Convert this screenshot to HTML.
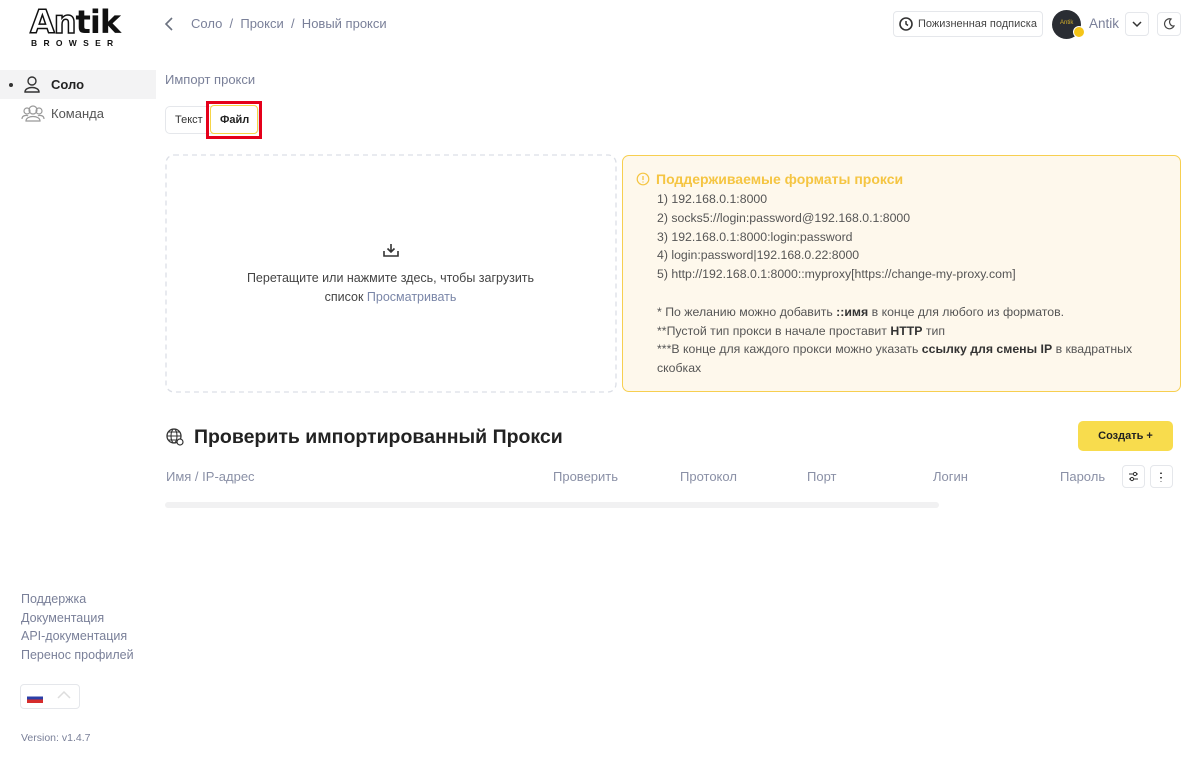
<!DOCTYPE html>
<html><head><meta charset="utf-8"><style>
*{box-sizing:border-box;margin:0;padding:0}
body{width:1197px;height:768px;background:#fff;font-family:"Liberation Sans","Noto Sans CJK SC",sans-serif;color:#444;position:relative;overflow:hidden;font-size:13px}
.a{position:absolute}
.grey{color:#7a8099}
.sb a{display:block;color:#7a8099;font-size:12.5px;line-height:18.5px;text-decoration:none}
.box{border:1px solid #e5e7eb;border-radius:4px;background:#fff}
.th{position:absolute;top:469px;font-size:13px;color:#8a90a6}
</style></head><body>
<div class="a" style="left:30px;top:6px;font-weight:900;font-size:32px;letter-spacing:-1px;color:#111;font-family:'DejaVu Sans',sans-serif;line-height:32px"><span style="color:#fff;-webkit-text-stroke:1.5px #111">An</span>tik</div>
<div class="a" style="left:31px;top:38px;font-size:8.5px;letter-spacing:6.3px;font-weight:bold;color:#111">BROWSER</div>
<svg class="a" style="left:163px;top:16px" width="12" height="16"><path d="M9 2 L3 8 L9 14" stroke="#6b7280" stroke-width="1.6" fill="none"/></svg>
<div class="a grey" style="left:191px;top:16px;font-size:13px">Соло &nbsp;/ &nbsp;Прокси &nbsp;/ &nbsp;Новый прокси</div>
<div class="a box" style="left:893px;top:11px;width:150px;height:26px;font-size:11px;color:#444;padding:6px 0 0 24px">Пожизненная подписка</div>
<svg class="a" style="left:898px;top:16px" width="16" height="16"><circle cx="8" cy="8" r="6" stroke="#333" stroke-width="1.6" fill="none"/><path d="M8 5 V8 L10 9.5" stroke="#333" stroke-width="1.5" fill="none"/></svg>
<div class="a" style="left:1052px;top:10px;width:29px;height:29px;border-radius:50%;background:#2a2d33"></div>
<div class="a" style="left:1060px;top:20px;font-size:6px;color:#d4b02a">Antik</div>
<div class="a" style="left:1073px;top:26px;width:12px;height:12px;border-radius:50%;background:#f5c518;border:1.5px solid #fff"></div>
<div class="a grey" style="left:1089px;top:16px;font-size:13.5px">Antik</div>
<div class="a box" style="left:1125px;top:12px;width:24px;height:24px"></div>
<svg class="a" style="left:1131px;top:19px" width="12" height="10"><path d="M2 3 L6 7 L10 3" stroke="#333" stroke-width="1.5" fill="none"/></svg>
<div class="a box" style="left:1157px;top:12px;width:24px;height:24px"></div>
<svg class="a" style="left:1163px;top:17px" width="13" height="13"><path d="M8 2 A5 5 0 1 0 11 9 A4 4 0 0 1 8 2Z" stroke="#444" stroke-width="1.2" fill="none"/></svg>
<div class="a" style="left:0;top:70px;width:156px;height:29px;background:#f3f3f4"></div>
<div class="a" style="left:9px;top:83px;width:4px;height:4px;border-radius:50%;background:#333"></div>
<svg class="a" style="left:23px;top:75px" width="18" height="19"><circle cx="9" cy="6" r="4" stroke="#333" stroke-width="1.4" fill="none"/><path d="M2 17 C2 11 16 11 16 17 Z" stroke="#333" stroke-width="1.4" fill="none"/></svg>
<div class="a" style="left:51px;top:77px;font-weight:bold;font-size:13px;color:#222">Соло</div>
<svg class="a" style="left:21px;top:104px" width="24" height="19"><circle cx="12" cy="6" r="4" stroke="#999" stroke-width="1.2" fill="none"/><circle cx="6" cy="7" r="3" stroke="#999" stroke-width="1.2" fill="none"/><circle cx="18" cy="7" r="3" stroke="#999" stroke-width="1.2" fill="none"/><path d="M5 17 C5 11 19 11 19 17Z M1 15 C1 11 6 11 7 12 M23 15 C23 11 18 11 17 12" stroke="#999" stroke-width="1.2" fill="none"/></svg>
<div class="a" style="left:51px;top:106px;font-size:13px;color:#555">Команда</div>
<div class="a sb" style="left:21px;top:590px"><a>Поддержка</a><a>Документация</a><a>API-документация</a><a>Перенос профилей</a></div>
<div class="a box" style="left:20px;top:684px;width:60px;height:25px"></div>
<div class="a" style="left:27px;top:693px;width:16px;height:10px;background:linear-gradient(#fff 0 33%,#2b3fa8 33% 66%,#d62c2c 66%)"></div>
<svg class="a" style="left:56px;top:690px" width="16" height="10"><path d="M2 8 L8 2 L14 8" stroke="#ddd" stroke-width="1.5" fill="none"/></svg>
<div class="a" style="left:21px;top:732px;font-size:10.5px;color:#7a8099">Version: v1.4.7</div>
<div class="a grey" style="left:165px;top:72px;font-size:13px">Импорт прокси</div>
<div class="a box" style="left:165px;top:106px;width:94px;height:28px;border-radius:5px"></div>
<div class="a" style="left:175px;top:114px;font-size:11px;color:#333">Текст</div>
<div class="a" style="left:206px;top:101px;width:56px;height:38px;border:3px solid #e5001a"></div>
<div class="a" style="left:210px;top:105px;width:48px;height:29px;border:1.5px solid #f5d547;border-radius:4px;background:#fff"></div>
<div class="a" style="left:220px;top:114px;font-size:11px;font-weight:bold;color:#222">Файл</div>
<svg class="a" style="left:165px;top:154px" width="452" height="239"><rect x="1" y="1" width="450" height="237" rx="8" fill="none" stroke="#dcdfe6" stroke-width="1.3" stroke-dasharray="5 4"/></svg>
<svg class="a" style="left:382px;top:242px" width="18" height="17"><path d="M9 2 V10 M5.5 6.5 L9 10 L12.5 6.5 M2 9 V14 H16 V9" stroke="#333" stroke-width="1.6" fill="none"/></svg>
<div class="a" style="left:165px;top:269px;width:451px;text-align:center;font-size:12.5px;line-height:19px;color:#444">Перетащите или нажмите здесь, чтобы загрузить<br>список <span style="color:#7a86a8">Просматривать</span></div>
<div class="a" style="left:622px;top:155px;width:559px;height:237px;border:1.5px solid #f7cf50;border-radius:7px;background:#fef8ec"></div>
<svg class="a" style="left:636px;top:172px" width="14" height="14"><circle cx="7" cy="7" r="5.8" stroke="#f5c542" stroke-width="1.2" fill="none"/><path d="M7 4 V8 M7 9.5 V10.5" stroke="#f5c542" stroke-width="1.3"/></svg>
<div class="a" style="left:656px;top:171px;font-size:14px;font-weight:bold;color:#f5c542">Поддерживаемые форматы прокси</div>
<div class="a" style="left:657px;top:190px;font-size:12.3px;line-height:18.8px;color:#555">1) 192.168.0.1:8000<br>2) socks5://login:password@192.168.0.1:8000<br>3) 192.168.0.1:8000:login:password<br>4) login:password|192.168.0.22:8000<br>5) http://192.168.0.1:8000::myproxy[https://change-my-proxy.com]<br><br>* По желанию можно добавить <b style="color:#333">::имя</b> в конце для любого из форматов.<br>**Пустой тип прокси в начале проставит <b style="color:#333">HTTP</b> тип<br>***В конце для каждого прокси можно указать <b style="color:#333">ссылку для смены IP</b> в квадратных<br>скобках</div>
<svg class="a" style="left:165px;top:427px" width="20" height="20"><circle cx="9" cy="9" r="7" stroke="#333" stroke-width="1.3" fill="none"/><ellipse cx="9" cy="9" rx="3" ry="7" stroke="#333" stroke-width="1.1" fill="none"/><path d="M2 9 H16 M3 5 H15 M3 13 H15" stroke="#333" stroke-width="1"/><circle cx="15" cy="15" r="3" fill="#fff" stroke="#333" stroke-width="1.2"/></svg>
<div class="a" style="left:194px;top:426px;font-size:19.5px;font-weight:bold;color:#222">Проверить импортированный Прокси</div>
<div class="a" style="left:1078px;top:421px;width:95px;height:30px;background:#f8dc4d;border-radius:5px;font-size:11px;font-weight:bold;color:#222;line-height:30px;text-align:center">Создать +</div>
<div class="th" style="left:166px">Имя / IP-адрес</div>
<div class="th" style="left:553px">Проверить</div>
<div class="th" style="left:680px">Протокол</div>
<div class="th" style="left:807px">Порт</div>
<div class="th" style="left:933px">Логин</div>
<div class="th" style="left:1060px">Пароль</div>
<div class="a box" style="left:1122px;top:465px;width:23px;height:23px"></div>
<svg class="a" style="left:1127px;top:470px" width="13" height="13"><path d="M2 4 H11 M2 9 H11" stroke="#333" stroke-width="1.1"/><circle cx="8" cy="4" r="1.6" fill="#fff" stroke="#333"/><circle cx="5" cy="9" r="1.6" fill="#fff" stroke="#333"/></svg>
<div class="a box" style="left:1150px;top:465px;width:23px;height:23px"></div>
<div class="a" style="left:1160px;top:471px;width:2px;height:11px;background:radial-gradient(circle,#333 0.8px,transparent 1px) 0 0/2px 4.5px"></div>
<div class="a" style="left:165px;top:502px;width:774px;height:6px;border-radius:3px;background:#f1f1f2"></div>
</body></html>
